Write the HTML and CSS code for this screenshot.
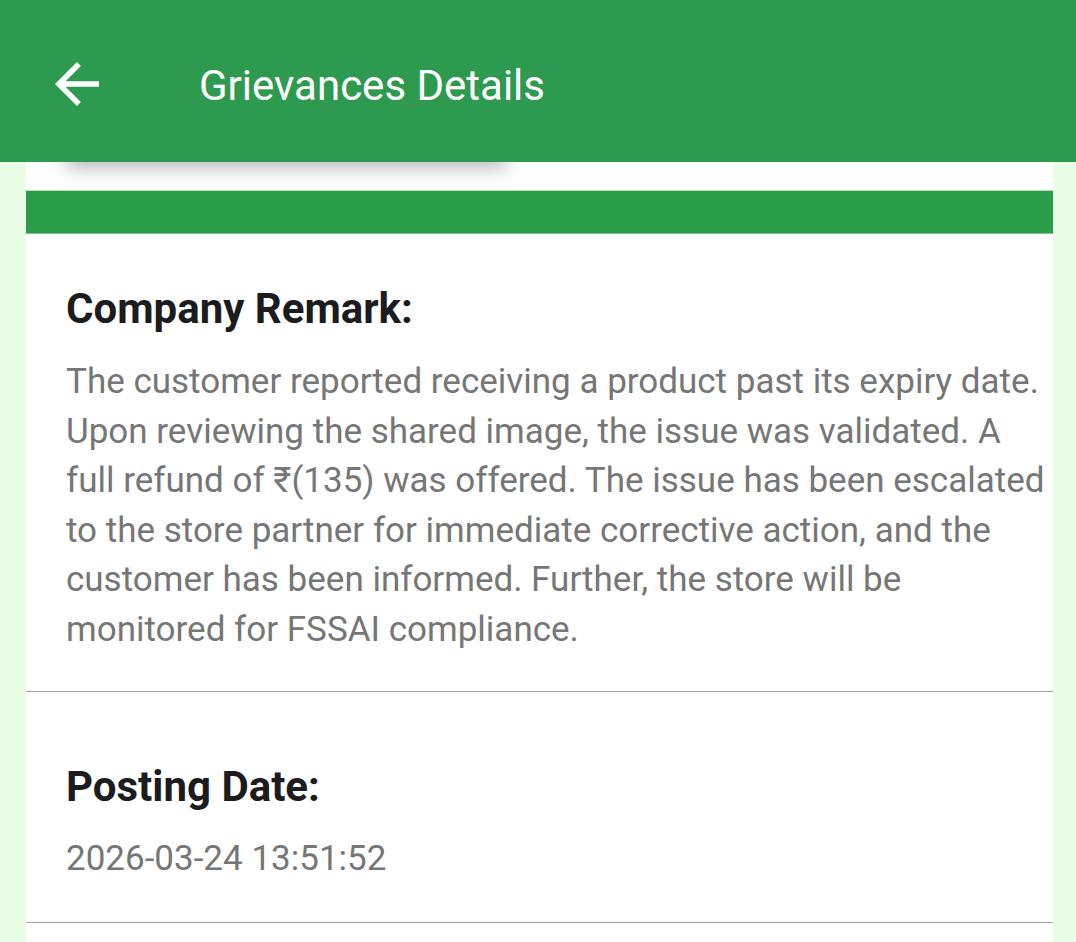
FILE: index.html
```html
<!DOCTYPE html>
<html>
<head>
<meta charset="utf-8">
<link rel="stylesheet" href="styles.css">
</head>
<body>
<header class="appbar">
  <svg class="back" width="66" height="66" viewBox="0 0 24 24">
    <path d="M20 11H7.83l5.59-5.59L12 4l-8 8 8 8 1.41-1.41L7.83 13H20v-2z" fill="#fff"/>
  </svg>
  <h1 class="title">Grievances Details</h1>
</header>
<main class="page">
  <div class="card">
    <div class="tabchip"></div>
    <div class="statusbar"></div>
    <section class="field field-remark">
      <h2 class="label">Company Remark:</h2>
      <p class="value">The customer reported receiving a product past its expiry date. Upon reviewing the shared image, the issue was validated. A full refund of ₹(135) was offered. The issue has been escalated to the store partner for immediate corrective action, and the customer has been informed. Further, the store will be monitored for FSSAI compliance.</p>
    </section>
    <section class="field field-date">
      <h2 class="label">Posting Date:</h2>
      <p class="value">2026-03-24 13:51:52</p>
    </section>
  </div>
</main>
</body>
</html>
```
FILE: styles.css
```css
html, body {
  margin: 0;
  padding: 0;
}
body {
  background: #eafde6;
  font-family: Roboto, "Noto Sans", sans-serif;
  width: 1076px;
  height: 942px;
  overflow: hidden;
}
.appbar {
  position: fixed;
  top: 0;
  left: 0;
  right: 0;
  height: 162px;
  box-sizing: border-box;
  padding-top: 8px;
  background: #2e9a4f;
  display: flex;
  align-items: center;
  z-index: 10;
}
.back {
  margin-left: 44px;
  margin-top: -2px;
}
.title {
  margin: 0 0 0 89px;
  color: #fff;
  font-weight: 400;
  font-size: 42px;
  letter-spacing: 0;
}
.page {
  padding: 0 23px 0 26px;
}
.card {
  background: #fff;
  margin-top: 100px;
  min-height: 842px;
}
.tabchip {
  margin-left: 40px;
  width: 440px;
  height: 62px;
  background: #fff;
  box-shadow: 0 6px 18px rgba(0, 0, 0, 0.28);
}
.statusbar {
  margin-top: 28px;
  height: 42px;
  background: #2a9d4b;
  border-top: 1px solid #b5e3bd;
  border-bottom: 1px solid #7cc48f;
}
.field {
  padding: 0 0 0 40px;
  border-bottom: 1.5px solid #a2a2a2;
}
.label {
  margin: 0;
  color: #1c1c1e;
  font-weight: 700;
  font-size: 42px;
  line-height: 49px;
}
.value {
  margin: 0;
  color: #767676;
  font-size: 35px;
  line-height: 49.5px;
}
.field-remark {
  padding-top: 50px;
  padding-bottom: 37px;
}
.field-remark .label {
  margin-bottom: 24px;
}
.field-date {
  padding-top: 70px;
  padding-bottom: 38px;
}
.field-date .label {
  margin-bottom: 23px;
}
```
